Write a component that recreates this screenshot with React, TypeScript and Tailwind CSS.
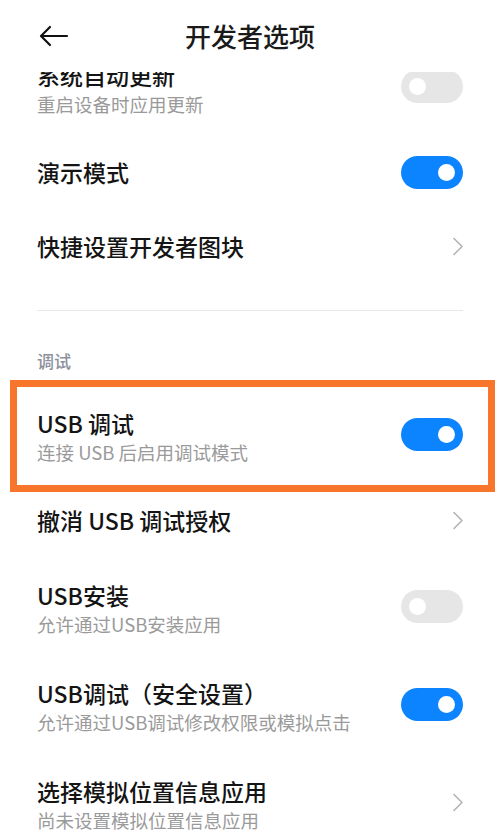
import React from "react";

const FONT = { fontFamily: '"Noto Sans CJK SC", "Noto Sans", sans-serif' };

function Toggle({ on }: { on: boolean }) {
  return (
    <div
      className={
        "flex h-[33px] w-[62px] shrink-0 items-center rounded-full px-[8px] " +
        (on ? "justify-end bg-[#0d84ff]" : "justify-start bg-[#e6e6e6]")
      }
    >
      <div className="h-[17px] w-[17px] rounded-full bg-white" />
    </div>
  );
}

function Chevron() {
  return (
    <svg width="12" height="19" viewBox="0 0 12 19" className="mr-[-1px] shrink-0">
      <path d="M2 1.5 L10 9.5 L2 17.5" fill="none" stroke="#b3b3b3" strokeWidth="1.6" strokeLinecap="round" strokeLinejoin="round" />
    </svg>
  );
}

function Row({
  title,
  sub,
  right,
  className = "",
}: {
  title: string;
  sub?: string;
  right: "on" | "off" | "chev";
  className?: string;
}) {
  return (
    <div className={"flex items-center justify-between px-[37px] " + (sub ? "h-[98px] " : "h-[74px] ") + className}>
      <div className={"flex flex-col " + (sub ? "pt-[3px]" : "")}>
        <div className="text-[23px] font-medium leading-[32px] text-[#141414]">{title}</div>
        {sub && <div className="text-[18.5px] leading-[26px] text-[#9a9a9a]">{sub}</div>}
      </div>
      {right === "chev" ? <Chevron /> : <Toggle on={right === "on"} />}
    </div>
  );
}

export default function App() {
  return (
    <div className="flex h-[835px] w-[500px] flex-col overflow-hidden bg-white" style={FONT}>
      <div className="relative z-10 flex h-[72px] shrink-0 items-center justify-center bg-white">
        <svg width="30" height="22" viewBox="0 0 30 22" className="absolute left-[39px] top-[25px]">
          <path d="M28 11 H3 M11 2 L2 11 L11 20" fill="none" stroke="#111" strokeWidth="2.2" strokeLinecap="round" strokeLinejoin="round" />
        </svg>
        <div className="mt-[-2px] text-[26px] font-medium text-[#1a1a1a]">开发者选项</div>
      </div>
      <div className="flex flex-col">
        <Row className="mt-[-35px]" title="系统自动更新" sub="重启设备时应用更新" right="off" />
        <Row title="演示模式" right="on" />
        <Row title="快捷设置开发者图块" right="chev" />
        <div className="mx-[37px] mt-[27px] h-px bg-[#e8e8e8]" />
        <div className="flex h-[74px] items-end px-[37px] pb-[13px]">
          <div className="text-[17px] font-medium leading-[22px] text-[#8c919c]">调试</div>
        </div>
        <div className="relative">
          <Row title="USB 调试" sub="连接 USB 后启用调试模式" right="on" />
          <div className="pointer-events-none absolute bottom-[-9px] left-[10px] right-[5px] top-[-5px] border-[7px] border-[#f7762c]" />
        </div>
        <Row title="撤消 USB 调试授权" right="chev" />
        <Row title="USB安装" sub="允许通过USB安装应用" right="off" />
        <Row title="USB调试（安全设置）" sub="允许通过USB调试修改权限或模拟点击" right="on" />
        <Row title="选择模拟位置信息应用" sub="尚未设置模拟位置信息应用" right="chev" />
      </div>
    </div>
  );
}
